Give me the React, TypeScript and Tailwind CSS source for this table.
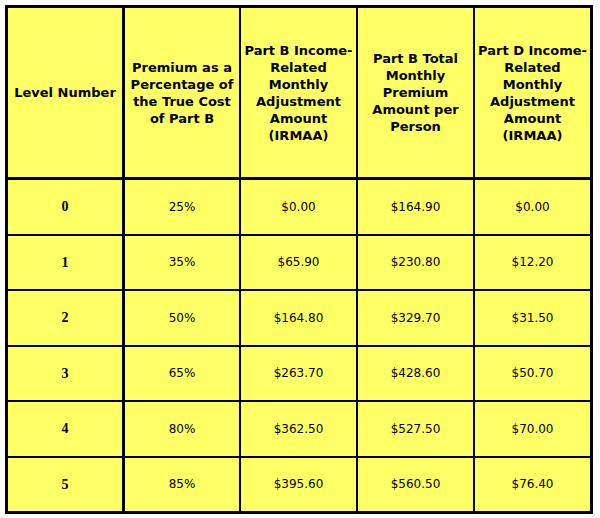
import React from "react";

const headers: string[][] = [
  ["Level Number"],
  ["Premium as a", "Percentage of", "the True Cost", "of Part B"],
  ["Part B Income-", "Related", "Monthly", "Adjustment", "Amount", "(IRMAA)"],
  ["Part B Total", "Monthly", "Premium", "Amount per", "Person"],
  ["Part D Income-", "Related", "Monthly", "Adjustment", "Amount", "(IRMAA)"],
];

const rows: string[][] = [
  ["0", "25%", "$0.00", "$164.90", "$0.00"],
  ["1", "35%", "$65.90", "$230.80", "$12.20"],
  ["2", "50%", "$164.80", "$329.70", "$31.50"],
  ["3", "65%", "$263.70", "$428.60", "$50.70"],
  ["4", "80%", "$362.50", "$527.50", "$70.00"],
  ["5", "85%", "$395.60", "$560.50", "$76.40"],
];

const colW = ["w-[117px]", "w-[116px]", "w-[117px]", "w-[117px]", "w-[115px]"];
const colBorder = [
  "border-r-[3px]",
  "border-r-2",
  "border-r-2",
  "border-r-2",
  "",
];

export default function App() {
  return (
    <div className="w-[600px] h-[518px] bg-white pt-[5px] pl-[5px]">
      <div className="w-[588px] h-[509px] border-[3px] border-black bg-[#ffff66] flex flex-col text-black">
        <div className="h-[172px] flex border-b-[3px] border-black shrink-0">
          {headers.map((lines, i) => (
            <div
              key={i}
              className={`${colW[i]} ${colBorder[i]} border-black flex items-center justify-center text-center font-bold text-[13px] leading-[17px] shrink-0`}
              style={{ fontFamily: '"DejaVu Sans", Verdana, sans-serif' }}
            >
              <div>
                {lines.map((l, j) => (
                  <div key={j}>{l}</div>
                ))}
              </div>
            </div>
          ))}
        </div>
        {rows.map((r, ri) => (
          <div
            key={ri}
            className={`flex-1 flex ${ri < rows.length - 1 ? "border-b-2" : ""} border-black`}
          >
            {r.map((c, ci) => (
              <div
                key={ci}
                className={`${colW[ci]} ${colBorder[ci]} border-black flex items-center justify-center shrink-0 ${
                  ci === 0 ? "font-bold text-[14px]" : "text-[12px]"
                }`}
                style={{
                  fontFamily:
                    ci === 0
                      ? '"Liberation Serif", "Times New Roman", serif'
                      : '"DejaVu Sans", Verdana, sans-serif',
                }}
              >
                {c}
              </div>
            ))}
          </div>
        ))}
      </div>
    </div>
  );
}
